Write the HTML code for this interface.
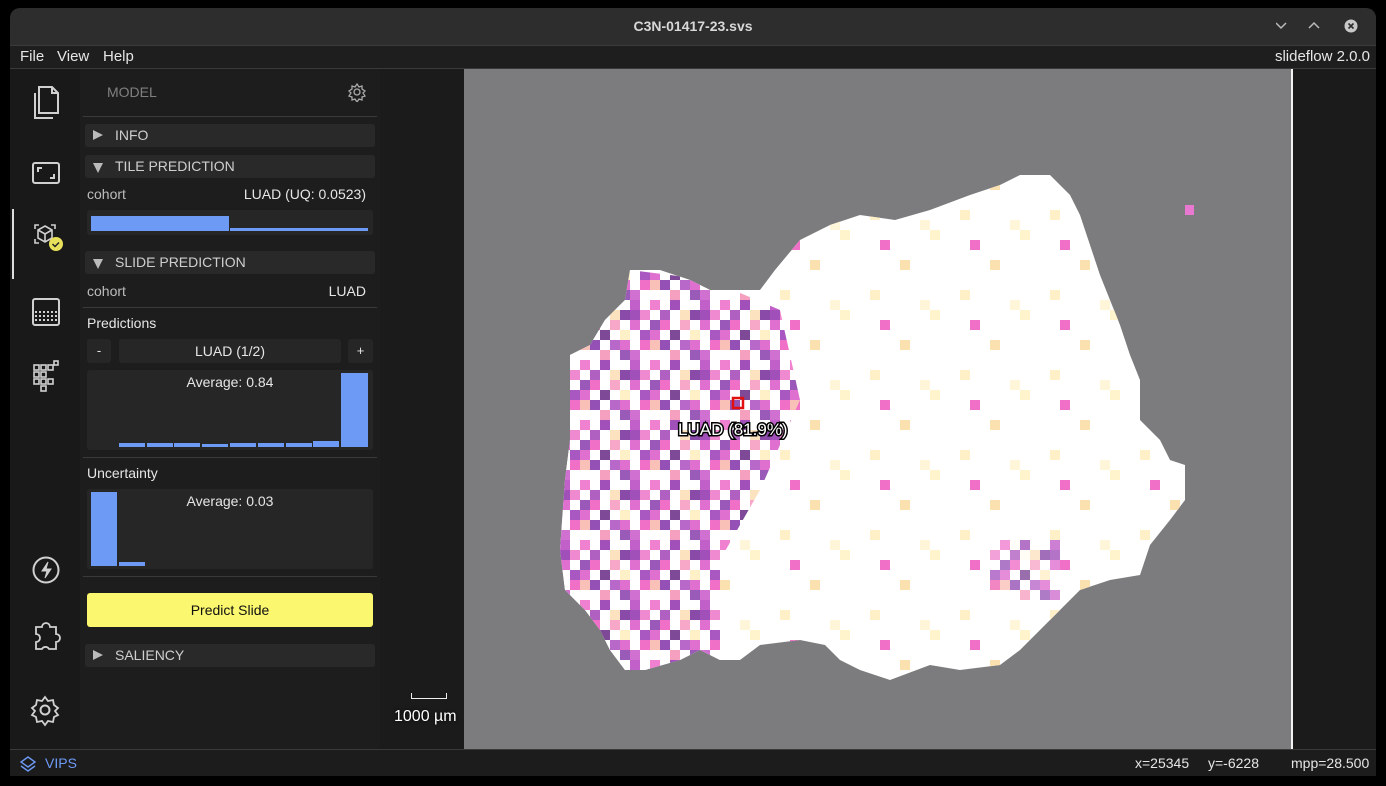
<!DOCTYPE html>
<html><head><meta charset="utf-8"><style>
*{margin:0;padding:0;box-sizing:border-box}
body{width:1386px;height:786px;background:#000;overflow:hidden;font-family:"Liberation Sans","DejaVu Sans",sans-serif;color:#e6e6e6;position:relative}
.abs{position:absolute}
.win{left:10px;top:8px;width:1366px;height:768px;background:#1c1c1c;border-radius:10px 10px 0 0;overflow:hidden}
.title{left:0;top:0;width:1366px;height:37px;background:#2d2d2d;text-align:center;font-weight:bold;font-size:14px;line-height:37px;color:#d8d8d8}
.menu{left:0;top:37px;width:1366px;height:24px;background:#1e1e1e;border-top:1px solid #3a3a3a;border-bottom:1px solid #3a3a3a;font-size:15px;line-height:22px}
.side{left:0;top:61px;width:70px;height:680px;background:#191919}
.panel{left:70px;top:61px;width:300px;height:680px;background:#1d1d1d}
.hdr{left:5px;width:290px;height:23px;background:#292929;border-radius:3px;font-size:14px;line-height:23px;color:#cfcfcf}
.hdr span{position:absolute;left:30px}
.tri{position:absolute;left:8px;top:6px;width:0;height:0}
.tr{border-top:5.5px solid transparent;border-bottom:5.5px solid transparent;border-left:10px solid #bbb}
.td{top:8px!important;border-left:5.5px solid transparent;border-right:5.5px solid transparent;border-top:10px solid #bbb}
.lbl{font-size:14px;color:#bdbdbd}
.box{background:#262626;border-radius:3px}
.line{height:1px;background:#3a3a3a}
.status{left:0;top:741px;width:1366px;height:27px;background:#1c1c1c;border-top:1px solid #3a3a3a;font-size:14px;line-height:26px}
</style></head><body>
<div class="abs win">
 <div class="abs title">C3N-01417-23.svs
  <svg class="abs" style="left:1266px;top:11px" width="90" height="16">
   <polyline points="0,4 5,9 10,4" fill="none" stroke="#bbb" stroke-width="1.5"/>
   <polyline points="33,9 38,4 43,9" fill="none" stroke="#bbb" stroke-width="1.5"/>
   <circle cx="75" cy="7" r="6.5" fill="#c8c8c8"/>
   <path d="M72.5 4.5l5 5M77.5 4.5l-5 5" stroke="#2d2d2d" stroke-width="1.6"/>
  </svg>
 </div>
 <div class="abs menu"><span class="abs" style="left:10px">File</span><span class="abs" style="left:47px">View</span><span class="abs" style="left:93px">Help</span><span class="abs" style="right:6px">slideflow 2.0.0</span></div>
 <div class="abs side">
  <div class="abs" style="left:2px;top:140px;width:2px;height:70px;background:#ddd"></div>
  <svg class="abs" style="left:0;top:0" width="70" height="680" fill="none" stroke="#d0d0d0" stroke-width="2">
   <path d="M29 18v26h19V24l-6-6z M42 18v6h6"/><path d="M25 24v25h18"/>
   <g transform="translate(0,-8)">
   <rect x="23" y="102" width="26" height="20" rx="2"/><path d="M28 111v-4h4M44 113v4h-4"/>
   <path d="M25 168v-4h4M41 164h4v4M25 178v4h4M45 178v4h-4" stroke-width="1.6"/>
   <path d="M35 165l7 4v8l-7 4-7-4v-8z M28 169l7 4 7-4M35 173v8" stroke-width="1.6"/>
   <circle cx="46" cy="183" r="7" fill="#e8e05a" stroke="none"/><path d="M42.5 183l2.5 2.5 4-4" stroke="#222" stroke-width="1.5"/>
   <rect x="23" y="238" width="26" height="26" rx="2"/>
   <path d="M25 251h22M25 255h22M25 259h22" stroke-dasharray="2 2" stroke-width="2"/>
   <g stroke-width="1.6"><rect x="24" y="311" width="5" height="5"/><rect x="31" y="311" width="5" height="5"/><rect x="24" y="318" width="5" height="5"/><rect x="31" y="318" width="5" height="5"/><rect x="38" y="318" width="5" height="5"/><rect x="31" y="304" width="5" height="5"/><rect x="24" y="304" width="5" height="5"/><rect x="38" y="304" width="5" height="5"/><rect x="31" y="325" width="5" height="5"/><rect x="44" y="300" width="4" height="4"/></g>
   <circle cx="36" cy="509" r="12.5"/><path d="M38 501l-6 9h5l-2 7 6-9h-5z" fill="#d0d0d0" stroke-width="1"/>
   <path d="M26 566h6a4 4 0 0 1 8 0h6v7a4 4 0 0 1 0 8v7h-7a4 4 0 0 0-7 0h-6v-7a4 4 0 0 0 0-8z" stroke-width="1.8"/>
   <circle cx="35" cy="649" r="4.5"/><path d="M35 636l3 4 5-1 1 5 4 3-3 3 3 4-4 2-1 5-5-1-3 4-3-4-5 1-1-5-4-2 3-4-3-3 4-3 1-5 5 1z" stroke-width="1.8"/>
   </g>
  </svg>
 </div>
 <div class="abs panel">
  <div class="abs" style="left:27px;top:15px;font-size:14px;color:#808080">MODEL</div>
  <svg class="abs" style="left:267px;top:13px" width="20" height="20" fill="none" stroke="#aaa" stroke-width="1.3"><circle cx="10" cy="10" r="3"/><path d="M10 2l2 3 3-1 0 3 3 2-2 2 2 3-3 1 0 3-3-1-2 3-2-3-3 1 0-3-3-1 2-3-2-2 3-2 0-3 3 1z"/></svg>
  <div class="abs line" style="left:3px;top:47px;width:294px"></div>
  <div class="abs hdr" style="top:55px"><i class="tri tr"></i><span>INFO</span></div>
  <div class="abs hdr" style="top:86px"><i class="tri td"></i><span>TILE PREDICTION</span></div>
  <div class="abs lbl" style="left:7px;top:117px">cohort</div>
  <div class="abs" style="right:14px;top:117px;font-size:14px">LUAD (UQ: 0.0523)</div>
  <div class="abs box" style="left:7px;top:141px;width:286px;height:25px"></div>
  <div class="abs" style="left:11px;top:147px;width:138px;height:15px;background:#6d9af5"></div>
  <div class="abs" style="left:150px;top:159px;width:138px;height:3px;background:#6d9af5"></div>
  <div class="abs hdr" style="top:182px"><i class="tri td"></i><span>SLIDE PREDICTION</span></div>
  <div class="abs lbl" style="left:7px;top:214px">cohort</div>
  <div class="abs" style="right:14px;top:214px;font-size:14px">LUAD</div>
  <div class="abs line" style="left:3px;top:238px;width:294px"></div>
  <div class="abs" style="left:7px;top:246px;font-size:14px">Predictions</div>
  <div class="abs box" style="left:7px;top:270px;width:24px;height:24px;text-align:center;font-size:13px;line-height:24px">-</div>
  <div class="abs box" style="left:39px;top:270px;width:222px;height:24px;text-align:center;font-size:14px;line-height:24px">LUAD (1/2)</div>
  <div class="abs box" style="left:268px;top:270px;width:25px;height:24px;text-align:center;font-size:13px;line-height:24px">+</div>
  <div class="abs box" style="left:7px;top:301px;width:286px;height:80px"></div>
  <div class="abs" style="left:7px;top:305px;width:286px;text-align:center;font-size:14px">Average: 0.84</div>
  <svg class="abs" style="left:7px;top:301px" width="286" height="80" fill="#6d9af5">
   <rect x="32" y="73" width="26" height="4"/><rect x="60" y="73" width="26" height="4"/><rect x="87" y="73" width="26" height="4"/><rect x="115" y="74" width="26" height="3"/><rect x="143" y="73" width="26" height="4"/><rect x="171" y="73" width="26" height="4"/><rect x="199" y="73" width="26" height="4"/><rect x="226" y="71" width="26" height="6"/><rect x="254" y="3" width="27" height="74"/>
  </svg>
  <div class="abs line" style="left:3px;top:388px;width:294px"></div>
  <div class="abs" style="left:7px;top:396px;font-size:14px">Uncertainty</div>
  <div class="abs box" style="left:7px;top:420px;width:286px;height:80px"></div>
  <div class="abs" style="left:7px;top:424px;width:286px;text-align:center;font-size:14px">Average: 0.03</div>
  <svg class="abs" style="left:7px;top:420px" width="286" height="80" fill="#6d9af5"><rect x="4" y="3" width="26" height="74"/><rect x="32" y="73" width="26" height="4"/></svg>
  <div class="abs line" style="left:3px;top:507px;width:294px"></div>
  <div class="abs" style="left:7px;top:524px;width:286px;height:34px;background:#fbf76e;border-radius:3px;color:#111;text-align:center;font-size:14px;line-height:34px">Predict Slide</div>
  <div class="abs hdr" style="top:575px"><i class="tri tr"></i><span>SALIENCY</span></div>
 </div>
 <div class="abs" style="left:370px;top:61px;width:84px;height:680px;background:#1b1b1b"></div>
 <div class="abs" style="left:1283px;top:61px;width:83px;height:680px;background:#1b1b1b"></div>
 <div class="abs" style="left:1281px;top:61px;width:2px;height:680px;background:#f2f2f2"></div>
 <div class="abs" style="left:401px;top:685px;width:36px;height:6px;border:1.5px solid #eee;border-top:none"></div>
 <div class="abs" style="left:384px;top:700px;font-size:16px;color:#fff;text-shadow:0 0 3px #000">1000 µm</div>
 <div class="abs status">
  <svg class="abs" style="left:9px;top:6px" width="18" height="16" fill="none" stroke="#6d9af5" stroke-width="1.4"><path d="M9 1l7 5-7 5-7-5z M2 10l7 5 7-5"/></svg>
  <span class="abs" style="left:35px;color:#6d9af5">VIPS</span>
  <span class="abs" style="left:1125px">x=25345</span><span class="abs" style="left:1198px">y=-6228</span><span class="abs" style="left:1281px">mpp=28.500</span>
 </div>
</div>
<svg class="abs" style="left:464px;top:69px" width="827" height="680">
 <defs>
  <clipPath id="tis"><polygon id="tp" points="566,106 586,106 596,116 606,126 616,146 626,176 636,206 646,231 656,256 666,286 676,311 676,351 696,371 706,391 721,396 721,431 706,451 686,476 676,506 646,511 616,521 596,541 576,561 556,581 536,596 496,601 466,596 426,611 396,601 376,591 361,576 336,571 296,576 276,591 256,591 236,581 216,591 181,601 161,601 146,581 136,561 121,541 101,521 96,481 101,411 106,371 106,286 126,276 141,251 161,231 166,201 196,201 226,211 246,221 296,221 311,201 336,171 366,156 396,146 431,151 466,141 506,126 536,116 556,106"/></clipPath>
  <pattern id="pa" width="70" height="60" patternUnits="userSpaceOnUse" x="96" y="1">
   <rect width="70" height="60" fill="#fff"/>
   <rect x="0" y="0" width="10" height="10" fill="#a050b8"/><rect x="10" y="0" width="10" height="10" fill="#f08ad0"/><rect x="30" y="0" width="10" height="10" fill="#b060c0"/><rect x="50" y="0" width="10" height="10" fill="#fde2c0"/><rect x="60" y="0" width="10" height="10" fill="#8a4aa8"/>
   <rect x="0" y="10" width="10" height="10" fill="#e070d0"/><rect x="20" y="10" width="10" height="10" fill="#9a58b8"/><rect x="30" y="10" width="10" height="10" fill="#f070c8"/><rect x="50" y="10" width="10" height="10" fill="#f7a8c8"/>
   <rect x="10" y="20" width="10" height="10" fill="#a858c0"/><rect x="20" y="20" width="10" height="10" fill="#e070d0"/><rect x="40" y="20" width="10" height="10" fill="#7e4a98"/><rect x="60" y="20" width="10" height="10" fill="#fff0c8"/>
   <rect x="10" y="30" width="10" height="10" fill="#f070c8"/><rect x="20" y="30" width="10" height="10" fill="#f9c0b8"/><rect x="30" y="30" width="10" height="10" fill="#9550b5"/><rect x="50" y="30" width="10" height="10" fill="#b868c8"/><rect x="60" y="30" width="10" height="10" fill="#e070d0"/>
   <rect x="0" y="40" width="10" height="10" fill="#d070d0"/><rect x="40" y="40" width="10" height="10" fill="#f6a0c0"/><rect x="60" y="40" width="10" height="10" fill="#9a5ab8"/><rect x="0" y="50" width="10" height="10" fill="#c060c8"/><rect x="20" y="50" width="10" height="10" fill="#f080d0"/><rect x="40" y="50" width="10" height="10" fill="#a050b8"/>
  </pattern>
  <pattern id="pb" width="90" height="80" patternUnits="userSpaceOnUse" x="96" y="1">
   <rect x="10" y="0" width="10" height="10" fill="#fff4cc"/><rect x="50" y="10" width="10" height="10" fill="#f070c8"/><rect x="70" y="30" width="10" height="10" fill="#fbe0b0"/><rect x="40" y="60" width="10" height="10" fill="#fff0c8"/><rect x="0" y="70" width="10" height="10" fill="#fff6da"/>
  </pattern>
 </defs>
 <rect width="827" height="680" fill="#7c7c7e"/>
 <use href="#tp" fill="#fff"/>
 <g clip-path="url(#tis)">
  <rect width="827" height="680" fill="url(#pb)"/>
  <polygon points="96,271 166,201 246,211 316,241 336,331 296,421 256,491 256,601 96,601" fill="url(#pa)"/>
  <polygon points="526,471 596,471 596,531 526,531" fill="url(#pa)" opacity="0.8"/>
 </g>
 <rect x="721" y="136" width="9" height="10" fill="#e878d0"/>
 <rect x="269" y="329" width="10" height="10" fill="none" stroke="#e01010" stroke-width="2.5"/>
 <text x="214" y="366" font-family="Liberation Sans, sans-serif" font-size="17" fill="#fff" stroke="#000" stroke-width="3" paint-order="stroke">LUAD (81.9%)</text>
</svg>
</body></html>
